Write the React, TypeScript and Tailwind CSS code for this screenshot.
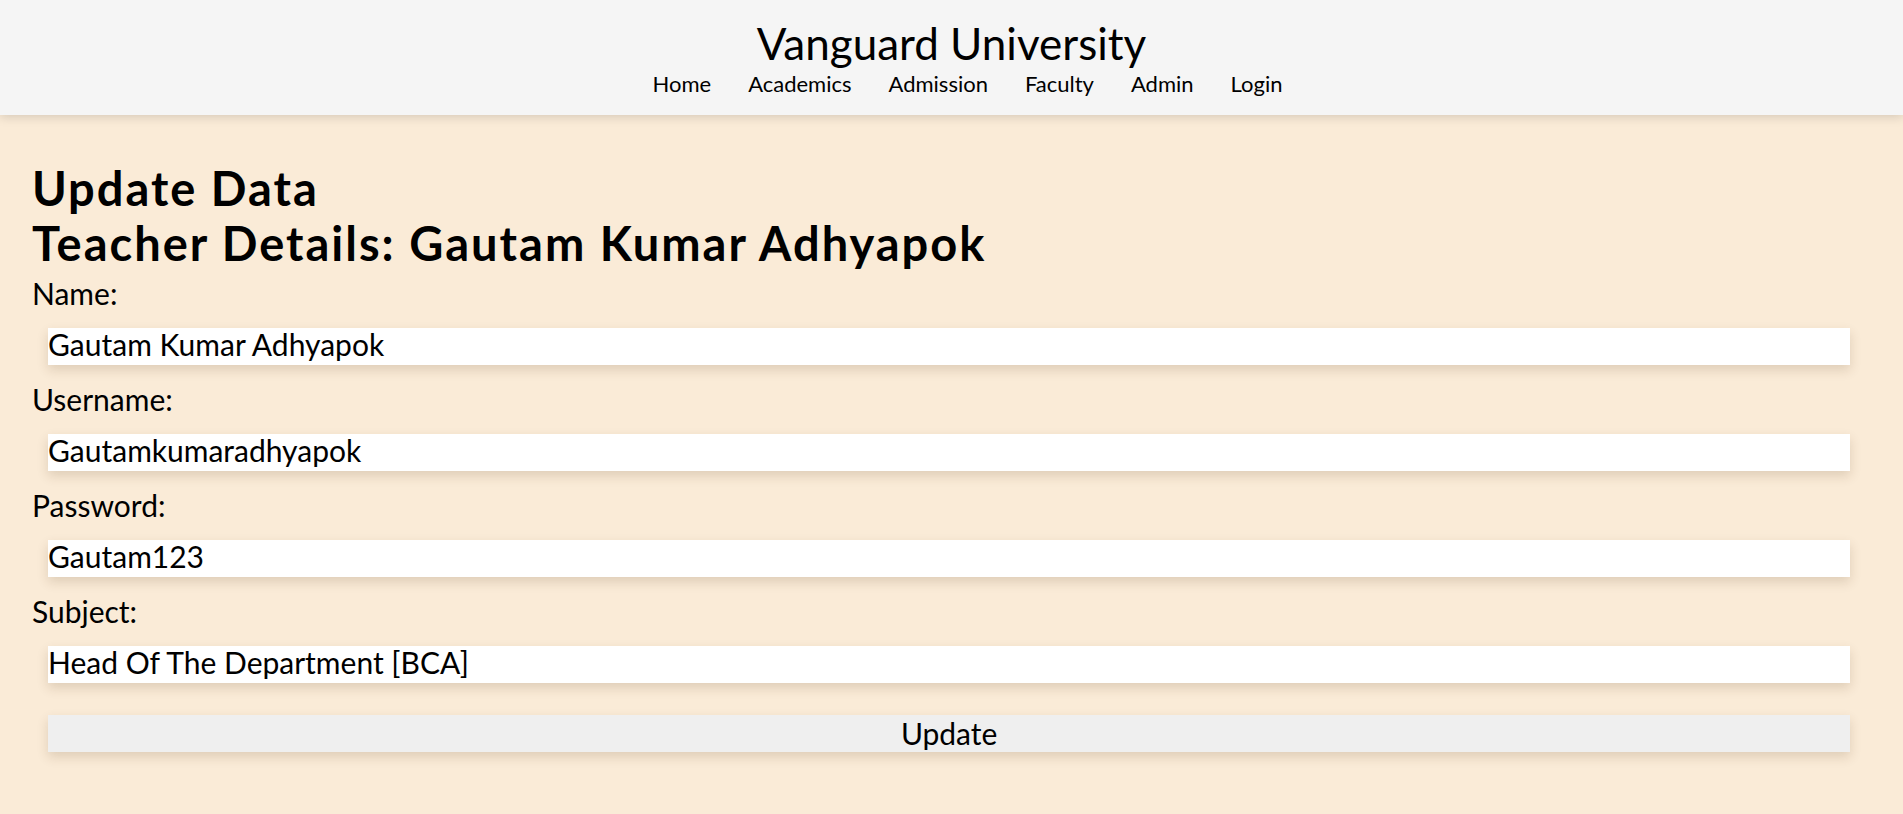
import React from "react";

const links = ["Home", "Academics", "Admission", "Faculty", "Admin", "Login"];

const fields = [
  { label: "Name:", value: "Gautam Kumar Adhyapok" },
  { label: "Username:", value: "Gautamkumaradhyapok" },
  { label: "Password:", value: "Gautam123" },
  { label: "Subject:", value: "Head Of The Department [BCA]" },
];

export default function App() {
  return (
    <div className="min-h-screen bg-[#faebd7] text-black font-['Lato',sans-serif]">
      <header className="relative z-10 flex h-[115px] flex-col items-center bg-[#f5f5f5] pt-[21px] shadow-[0_2px_10px_rgba(0,0,0,0.15)]">
        <h1 className="text-[44px] leading-none">Vanguard University</h1>
        <nav className="mt-[8px] flex gap-[37px] pl-8 text-[22px] leading-none">
          {links.map((l) => (
            <a key={l} href="#">{l}</a>
          ))}
        </nav>
      </header>

      <main className="px-8 pt-[46px] pb-10">
        <h2 className="text-[47px] font-bold leading-[55px] tracking-[2px]">Update Data</h2>
        <h2 className="text-[47px] font-bold leading-[55px] tracking-[2px]">Teacher Details: Gautam Kumar Adhyapok</h2>
        <form className="mt-[4px]" onSubmit={(e) => e.preventDefault()}>
          {fields.map((f) => (
            <div key={f.label}>
              <label className="block text-[30px] leading-[36px]">{f.label}</label>
              <input
                defaultValue={f.value}
                className="mt-[17px] mb-[16px] ml-4 block h-[37px] w-[98%] bg-white pb-[4px] text-[30px] shadow-[0_5px_12px_rgba(80,50,20,0.16)] outline-none"
              />
            </div>
          ))}
          <button className="mt-[32px] ml-4 block h-[37px] w-[98%] bg-[#efefef] pb-[4px] text-[30px] leading-[36px] shadow-[0_5px_12px_rgba(80,50,20,0.16)]">
            Update
          </button>
        </form>
      </main>
    </div>
  );
}
